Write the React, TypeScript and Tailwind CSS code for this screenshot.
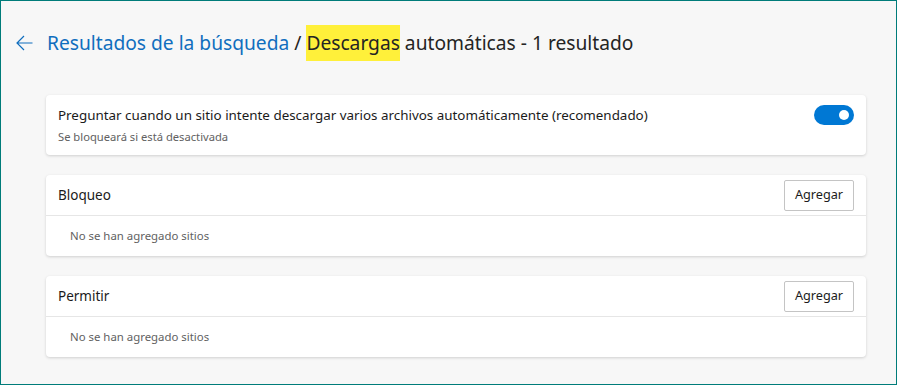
import React from 'react';

const FONT = "font-['Noto_Sans',sans-serif]";

function Toggle({ on }: { on: boolean }) {
  return (
    <div
      className={`flex h-5 w-10 items-center rounded-full px-[5px] ${
        on ? 'justify-end bg-[#0078d4]' : 'justify-start border border-[#616161] bg-white'
      }`}
    >
      <span className={`h-[10px] w-[10px] rounded-full ${on ? 'bg-white' : 'bg-[#616161]'}`} />
    </div>
  );
}

function SiteList({ title }: { title: string }) {
  return (
    <section className="rounded-[4px] bg-white shadow-[0_1px_3px_rgba(0,0,0,0.16)]">
      <div className="flex h-[41px] items-center justify-between border-b border-[#e6e6e6] pl-3 pr-3">
        <h3 className="text-[13.5px] text-[#1b1b1b]">{title}</h3>
        <button className="h-[31px] w-[70px] rounded-[2px] border border-[#c4c4c4] bg-white text-[12.7px] text-[#1b1b1b]">
          Agregar
        </button>
      </div>
      <div className="flex h-10 items-center pl-6 text-[11.4px] text-[#616161]">
        No se han agregado sitios
      </div>
    </section>
  );
}

export default function App() {
  return (
    <div className={`${FONT} h-[385px] w-[897px] overflow-hidden border border-[#007c7a] bg-[#f7f7f7]`}>
      <header className="flex h-[94px] items-center pb-[10px] pl-[14px]">
        <svg width="18" height="20" viewBox="0 0 18 20" className="text-[#106ebe]">
          <path d="M17.5 10H2M9 3l-7 7 7 7" fill="none" stroke="currentColor" strokeWidth="1.2" />
        </svg>
        <h1 className="ml-[14px] text-[19.2px] leading-[36px] text-[#242424]">
          <span className="text-[#106ebe]">Resultados de la búsqueda</span> /{' '}
          <span className="inline-block bg-[#fff03a] leading-[36px]">Descargas</span> automáticas - 1 resultado
        </h1>
      </header>
      <main className="flex flex-col gap-5 pl-[45px] pr-[30px]">
        <section className="flex h-[60px] items-start justify-between rounded-[4px] bg-white pl-3 pr-3 pt-[10px] shadow-[0_1px_3px_rgba(0,0,0,0.16)]">
          <div>
            <div className="text-[13.4px] leading-5 text-[#1b1b1b]">
              Preguntar cuando un sitio intente descargar varios archivos automáticamente (recomendado)
            </div>
            <div className="mt-[4px] text-[11.2px] leading-4 text-[#616161]">
              Se bloqueará si está desactivada
            </div>
          </div>
          <Toggle on />
        </section>
        <SiteList title="Bloqueo" />
        <SiteList title="Permitir" />
      </main>
    </div>
  );
}
